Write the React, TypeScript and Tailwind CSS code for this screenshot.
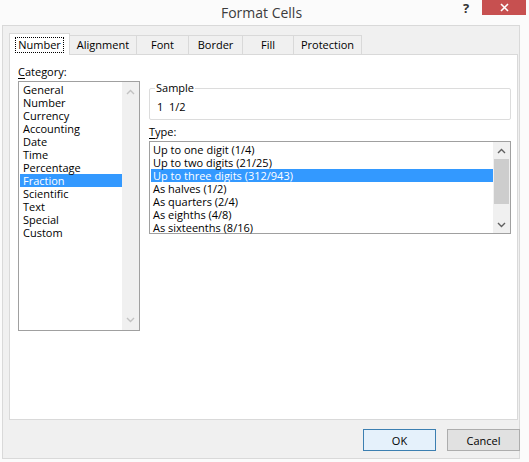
import React from "react";

const font = "font-['Open_Sans','Noto_Sans',sans-serif]";

const categories = [
  "General",
  "Number",
  "Currency",
  "Accounting",
  "Date",
  "Time",
  "Percentage",
  "Fraction",
  "Scientific",
  "Text",
  "Special",
  "Custom",
];

const types = [
  "Up to one digit (1/4)",
  "Up to two digits (21/25)",
  "Up to three digits (312/943)",
  "As halves (1/2)",
  "As quarters (2/4)",
  "As eighths (4/8)",
  "As sixteenths (8/16)",
];

const tabs = [
  { label: "Number", w: "w-[61px]" },
  { label: "Alignment", w: "w-[68px]" },
  { label: "Font", w: "w-[53px]" },
  { label: "Border", w: "w-[55px]" },
  { label: "Fill", w: "w-[52px]" },
  { label: "Protection", w: "w-[69px]" },
];

function Chevron({ up, color }: { up?: boolean; color: string }) {
  return (
    <svg width="9" height="6" viewBox="0 0 9 6" fill="none">
      <path
        d={up ? "M1 5 L4.5 1.5 L8 5" : "M1 1 L4.5 4.5 L8 1"}
        stroke={color}
        strokeWidth="1.4"
      />
    </svg>
  );
}

export default function App() {
  return (
    <div className={`w-[529px] h-[462px] bg-[#fbfbfb] flex flex-col text-[11px] leading-[13px] text-black ${font}`}>
      {/* Title bar */}
      <div className="relative h-[25px] shrink-0 flex items-center justify-center">
        <span className="text-[14px] leading-[18px] text-[#3c3c3c] pt-[1px] pr-[6px]">Format Cells</span>
        <span className="absolute left-[463px] top-[1px] text-[13px] leading-[14px] font-bold text-[#333]">?</span>
        <div className="absolute left-[482px] top-0 w-[44px] h-[15px] bg-[#c75050] flex items-center justify-center">
          <svg width="9" height="9" viewBox="0 0 9 9">
            <path d="M1 1 L8 8 M8 1 L1 8" stroke="#fff" strokeWidth="1.6" />
          </svg>
        </div>
      </div>

      {/* Client area */}
      <div className="flex-1 ml-[2px] mr-[9px] mb-[3px] bg-[#f0f0f0] border border-[#d9d9d9] flex flex-col pl-[6px] pt-[7px]">
        {/* Tabs */}
        <div className="flex items-end h-[22px] relative z-10">
          {tabs.map((t, i) =>
            i === 0 ? (
              <div
                key={t.label}
                className={`${t.w} h-[22px] bg-white border border-b-0 border-[#d9d9d9] flex items-center justify-center`}
              >
                <span className="border border-dotted border-black px-[2px] leading-[14px]">{t.label}</span>
              </div>
            ) : (
              <div
                key={t.label}
                className={`${t.w} h-[20px] -ml-px bg-[#f0f0f0] border border-[#d9d9d9] flex items-center justify-center pb-px`}
              >
                {t.label}
              </div>
            )
          )}
        </div>

        {/* Panel */}
        <div className="-mt-px w-[509px] h-[366px] bg-white border border-[#d9d9d9] flex gap-[9px] pl-[8px] pt-[10px]">
          {/* Category column */}
          <div className="flex flex-col w-[122px]">
            <div className="h-[16px]">
              <span className="underline underline-offset-2">C</span>ategory:
            </div>
            <div className="h-[250px] border border-[#a0a0a0] flex">
              <div className="flex-1 pt-[1px] pl-[1px]">
                {categories.map((c) => (
                  <div
                    key={c}
                    className={`h-[13px] pl-[3px] ${c === "Fraction" ? "bg-[#3399ff] text-white" : ""}`}
                  >
                    {c}
                  </div>
                ))}
              </div>
              <div className="w-[17px] bg-[#f0f0f0] flex flex-col items-center justify-between py-[7px]">
                <Chevron up color="#c2c2c2" />
                <Chevron color="#c2c2c2" />
              </div>
            </div>
          </div>

          {/* Right column */}
          <div className="flex flex-col w-[362px]">
            {/* Sample group */}
            <div className="relative mt-[23px] h-[32px] border border-[#dcdcdc] rounded-[2px]">
              <span className="absolute -top-[8px] left-[5px] bg-white px-[1px]">Sample</span>
              <div className="pt-[11px] pl-[7px] whitespace-pre">1  1/2</div>
            </div>
            <div className="mt-[5px] h-[16px]">
              <span className="underline underline-offset-2">T</span>ype:
            </div>
            <div className="h-[93px] border border-[#a0a0a0] flex">
              <div className="flex-1 pt-[1px] pl-[1px]">
                {types.map((t, i) => (
                  <div
                    key={t}
                    className={`h-[13px] pl-[2px] ${i === 2 ? "bg-[#3399ff] text-white" : ""}`}
                  >
                    {t}
                  </div>
                ))}
              </div>
              <div className="w-[17px] bg-[#f0f0f0] flex flex-col items-center">
                <div className="h-[17px] flex items-center justify-center">
                  <Chevron up color="#606060" />
                </div>
                <div className="w-[15px] h-[45px] bg-[#cdcdcd]" />
                <div className="flex-1" />
                <div className="h-[17px] flex items-center justify-center">
                  <Chevron color="#606060" />
                </div>
              </div>
            </div>
          </div>
        </div>

        {/* Buttons */}
        <div className="flex justify-end gap-[11px] mt-[9px] -mr-px">
          <button className="w-[73px] h-[22px] bg-[#e5f1fb] border border-[#3c7fb1] text-[11px]">OK</button>
          <button className="w-[73px] h-[22px] bg-[#e1e1e1] border border-[#adadad] text-[11px]">Cancel</button>
        </div>
      </div>
    </div>
  );
}
